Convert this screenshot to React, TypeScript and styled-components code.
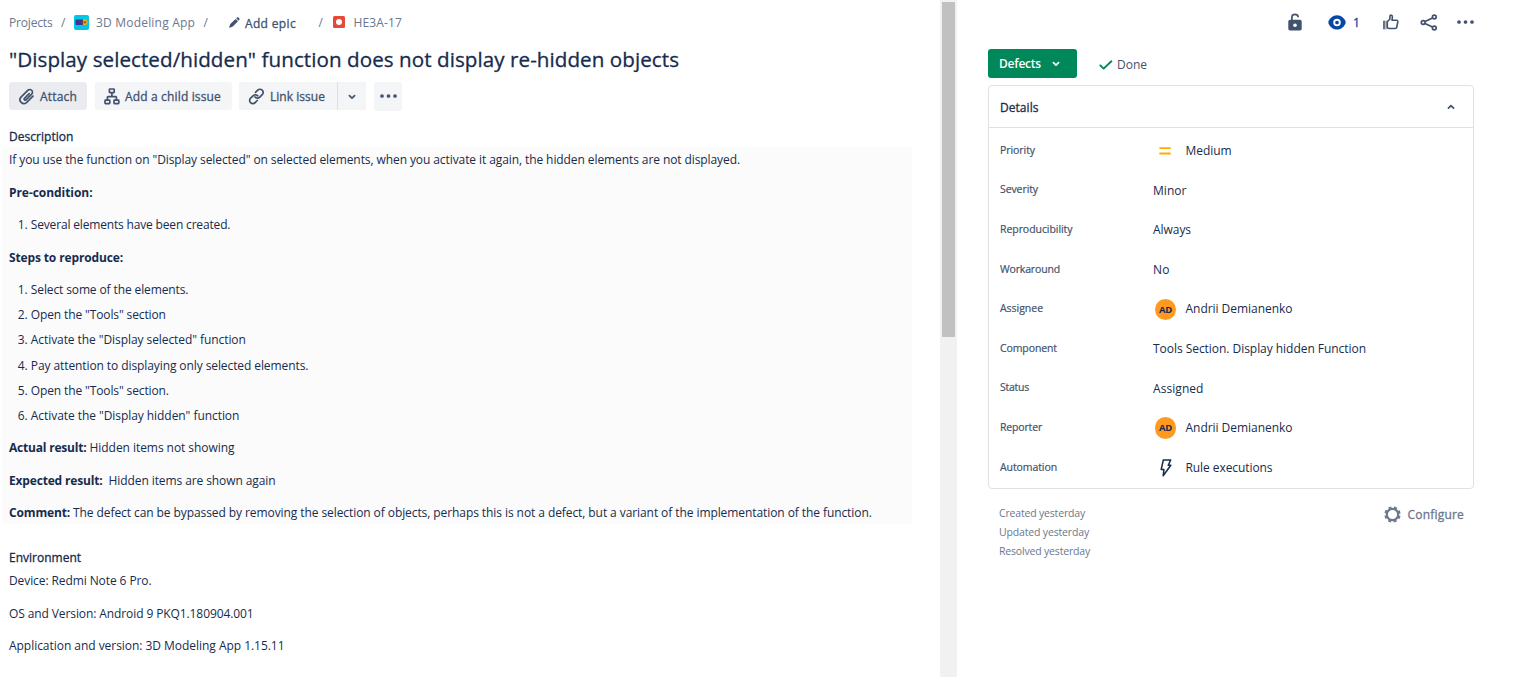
import React from "react";
import styled, { createGlobalStyle } from "styled-components";

const ink = "#172b4d";
const slate = "#42526e";
const grey = "#6b778c";

const Global = createGlobalStyle`
  * { box-sizing: border-box; }
  body {
    margin: 0;
    background: #fff;
    color: ${ink};
    font-family: "Open Sans", "Noto Sans", sans-serif;
    font-size: 12px;
    overflow: hidden;
  }
  svg { display: block; flex: none; }
`;

const Text = styled.span<{ $ls?: number; $medium?: boolean }>`
  white-space: pre;
  letter-spacing: ${(p) => p.$ls ?? 0}px;
  -webkit-text-stroke: ${(p) => (p.$medium ? "0.3px currentColor" : "0")};
`;

const Page = styled.div`
  display: flex;
  width: 1516px;
  height: 677px;
`;

const Main = styled.main`
  width: 940px;
  padding: 12px 28px 0 2px;
`;

const Inset = styled.div`
  padding-left: 7px;
`;

const Scrollbar = styled.div`
  width: 17px;
  padding: 2px 2px 0;
  background: #f1f1f1;
`;

const Thumb = styled.div`
  height: 335px;
  background: #c1c1c1;
`;

const Breadcrumbs = styled.nav`
  display: flex;
  align-items: center;
  height: 22px;
  color: ${grey};
`;

const Crumb = styled.div<{ $width?: number; $strong?: boolean; $raise?: boolean }>`
  display: flex;
  align-items: center;
  flex: none;
  width: ${(p) => (p.$width ? p.$width + "px" : "auto")};
  height: 22px;
  line-height: 22px;
  padding-bottom: ${(p) => (p.$raise ? 2 : 0)}px;
  padding-top: ${(p) => (p.$strong ? 1 : 0)}px;
  color: ${(p) => (p.$strong ? slate : grey)};
`;

const Title = styled.h1`
  margin: 10px 0 0;
  height: 30px;
  line-height: 30px;
  font-size: 20.6px;
  font-weight: 500;
`;

const Toolbar = styled.div`
  display: flex;
  align-items: flex-start;
  height: 53px;
  padding-top: 8px;
`;

const Button = styled.button<{ $width: number; $active?: boolean; $tall?: boolean; $round?: string; $left?: number; $after?: number }>`
  display: flex;
  align-items: center;
  gap: 5px;
  width: ${(p) => p.$width}px;
  height: ${(p) => (p.$tall ? 29 : 28)}px;
  margin-right: ${(p) => p.$after ?? 0}px;
  padding: ${(p) => (p.$tall ? 0 : 1)}px 0 ${(p) => (p.$tall ? 1 : 0)}px ${(p) => p.$left ?? 9}px;
  border: 0;
  border-radius: ${(p) => p.$round ?? "3px"};
  background: ${(p) => (p.$active ? "#ebecf0" : "#f4f5f7")};
  color: ${slate};
  font: 500 12px/28px "Open Sans", "Noto Sans", sans-serif;
`;

const Split = styled.div`
  display: flex;
  gap: 1px;
  margin-right: 8px;
  background: #dcdfe4;
  border-radius: 3px;
`;

const Label = styled.h2`
  margin: 0;
  height: 20px;
  line-height: 20px;
  font-size: 12px;
  font-weight: 500;
`;

const Description = styled.section`
  width: 910px;
  height: 377px;
  margin-bottom: 24px;
  padding: 2.4px 7px 0;
  border-radius: 3px;
  background: #fbfbfb;
`;

const Para = styled.p`
  margin: 0 0 10.8px;
  line-height: 21.6px;
  white-space: nowrap;
`;

const Steps = styled.ol`
  display: flex;
  flex-direction: column;
  gap: 3.6px;
  margin: 0 0 10.8px;
  padding: 0 0 0 21.8px;
  line-height: 21.6px;
`;

const Environment = styled.div`
  padding: 2.2px 0 0;
`;

const Side = styled.aside`
  width: 559px;
  padding: 10px 42px 0 31px;
`;

const Actions = styled.div`
  display: flex;
  align-items: center;
  height: 24px;
  padding-left: 300px;
  color: ${slate};
`;

const Action = styled.div<{ $width: number }>`
  display: flex;
  align-items: center;
  flex: none;
  gap: 7.5px;
  width: ${(p) => p.$width}px;
  color: #0747a6;
`;

const StatusRow = styled.div`
  display: flex;
  align-items: center;
  gap: 22px;
  height: 28px;
  margin-top: 15px;
`;

const StatusButton = styled.button`
  display: flex;
  align-items: center;
  justify-content: space-between;
  width: 89px;
  height: 29px;
  padding: 1px 17px 0 11px;
  border: 0;
  border-radius: 3px;
  background: #00875a;
  color: #fff;
  font: 600 12px/28px "Open Sans", "Noto Sans", sans-serif;
`;

const Resolution = styled.div`
  display: flex;
  align-items: center;
  gap: 4px;
  padding-top: 3px;
  color: ${slate};
`;

const Card = styled.section`
  width: 486px;
  height: 404px;
  margin-top: 8px;
  border: 1px solid #dfe1e6;
  border-radius: 4px;
`;

const CardHeader = styled.header`
  display: flex;
  align-items: center;
  justify-content: space-between;
  height: 42px;
  padding: 1px 18px 0 11px;
  border-bottom: 1px solid #dfe1e6;
`;

const Fields = styled.div`
  padding: 2.7px 0 0 11px;
`;

const Field = styled.div`
  display: grid;
  grid-template-columns: 153px 1fr;
  align-items: center;
  height: 39.6px;
`;

const FieldName = styled.div`
  padding-bottom: 1.4px;
  font-size: 10.5px;
  line-height: 16px;
  color: ${slate};
  span { -webkit-text-stroke: 0.2px currentColor; }
`;

const FieldValue = styled.div`
  display: flex;
  align-items: center;
  padding-top: 1px;
  line-height: 20px;
`;

const IconSlot = styled.div`
  display: flex;
  justify-content: center;
  flex: none;
  width: 25px;
  margin-right: 7.5px;
`;

const Avatar = styled.div`
  width: 21.5px;
  height: 21.5px;
  border-radius: 50%;
  background: #ff991f;
  color: ${ink};
  font-size: 9.5px;
  font-weight: 700;
  line-height: 21.5px;
  letter-spacing: -0.2px;
  text-align: center;
`;

const Footer = styled.footer`
  display: flex;
  justify-content: space-between;
  width: 486px;
  padding: 14px 10px 0 11px;
  color: ${grey};
`;

const Dates = styled.div`
  padding-top: 0.6px;
  font-size: 10.5px;
  line-height: 19.4px;
`;

const Configure = styled.div`
  display: flex;
  align-items: center;
  gap: 6.5px;
  height: 22px;
`;

const ProjectIcon = () => (
  <svg width="15" height="15" viewBox="0 0 15 15">
    <rect width="15" height="15" rx="2" fill="#00c7e5" />
    <rect x="1.5" y="4.500" width="8" height="5.500" rx="0.800" fill="#403294" />
    <circle cx="10.600" cy="7.200" r="2.900" fill="#f5a81c" />
    <circle cx="10.800" cy="7.200" r="1.300" fill="#8a6238" />
    <path d="M7.600 4.900h1.200v4.800H7.600z" fill="#36305f" />
  </svg>
);

const PencilIcon = () => (
  <svg width="11" height="11" viewBox="0 0 11 11" fill={slate}>
    <path d="M7.200 1.300 9.600 3.700 10.100 3.100c.6-.6.6-1.100.2-1.600l-.9-.9C8.900.2 8.400.2 7.800.7zM6.600 1.900 1.300 7.100.2 10.200c-.1.300.2.600.5.500L3.800 9.500 9 4.300z" />
  </svg>
);

const DefectIcon = () => (
  <svg width="12" height="12" viewBox="0 0 12 12">
    <rect width="12" height="12" rx="1.500" fill="#e5493a" />
    <circle cx="6" cy="6" r="3" fill="#fff" />
  </svg>
);

const ClipIcon = () => (
  <svg width="17" height="17" viewBox="0 0 17 17" fill="none" stroke={slate} strokeWidth="1.700" strokeLinecap="round">
    <path d="M11.200 5.600 6.500 10.300a1 1 0 0 0 1.500 1.500l5.700-5.700a2.700 2.700 0 0 0-3.900-3.800L3 9.100a3.900 3.900 0 0 0 5.500 5.500l6.500-6.500" />
  </svg>
);

const ChildIcon = () => (
  <svg width="16" height="17" viewBox="0 0 16 17" fill="none" stroke={slate} strokeWidth="1.700" strokeLinejoin="round">
    <rect x="5.400" y="1" width="4.800" height="3.600" rx=".6" />
    <rect x="1" y="12.200" width="4.800" height="3.400" rx=".6" />
    <rect x="10" y="12.200" width="4.800" height="3.400" rx=".6" />
    <path d="M7.900 4.600v4M3.400 12.200V9.300q0-.7.700-.7h7.600q.7 0 .7.700v2.900" />
  </svg>
);

const LinkIcon = () => (
  <svg width="17" height="17" viewBox="0 0 17 17" fill="none" stroke={slate} strokeWidth="1.700" strokeLinecap="round">
    <path d="M7.500 4.300 9.700 2.200a3.100 3.100 0 0 1 4.500 0 3.100 3.100 0 0 1 0 4.500L11.600 9.300a3.100 3.100 0 0 1-4.600-.3" />
    <path d="M9.300 12.500 7.100 14.700a3.100 3.100 0 0 1-4.500 0 3.100 3.100 0 0 1 0-4.500L5.300 7.600a3.100 3.100 0 0 1 4.500.3" />
  </svg>
);

const Chevron = ({ up, color = slate }: { up?: boolean; color?: string }) => (
  <svg width="8" height="6" viewBox="0 0 8 6" fill="none" stroke={color} strokeWidth="1.700" strokeLinecap="round" strokeLinejoin="round">
    <path d={up ? "M1.400 4.100 4 1.600l2.600 2.500" : "M1.400 1.700 4 4.200l2.600-2.500"} />
  </svg>
);

const DotsIcon = () => (
  <svg width="17" height="4" viewBox="0 0 17 4" fill={slate}>
    <circle cx="2" cy="2" r="1.850" />
    <circle cx="8.500" cy="2" r="1.850" />
    <circle cx="15" cy="2" r="1.850" />
  </svg>
);

const LockIcon = () => (
  <svg width="14" height="18" viewBox="0 0 14 18">
    <path d="M3.900 7.500V4.200q0-2.900 3.100-2.900 2.800 0 3.100 2.400" fill="none" stroke={slate} strokeWidth="1.700" strokeLinecap="round" />
    <rect x="0.300" y="6.800" width="13.400" height="10.800" rx="1.800" fill={slate} />
    <circle cx="7" cy="12.200" r="1.800" fill="#fff" />
  </svg>
);

const EyeIcon = () => (
  <svg width="18" height="15" viewBox="0 0 18 15">
    <path d="M9 .3C4.600.3 1.600 3.400.5 6.500q-.3.900 0 1.800C1.600 11.500 4.600 14.600 9 14.600s7.400-3.100 8.500-6.300q.3-.9 0-1.800C16.400 3.400 13.400.3 9 .3z" fill="#0747a6" />
    <circle cx="9" cy="7.500" r="2.800" fill="none" stroke="#fff" strokeWidth="1.900" />
  </svg>
);

const ThumbUpIcon = () => (
  <svg width="16" height="16" viewBox="0 0 16 16" fill="none" stroke={slate} strokeWidth="1.600" strokeLinejoin="round" strokeLinecap="round">
    <path d="M1 7.300v7.400" />
    <path d="M3 7.400v7.300" strokeWidth="1.800" opacity=".45" />
    <path d="M4.300 7.800 6.900 5V2.300Q7.100.9 8.400 1.200q1 .3 1 1.700L9 6.300h4.500q1.500.1 1.300 1.600l-1 5.100q-.3 1.500-1.700 1.500H6.200q-1.900 0-1.900-1.700z" />
  </svg>
);

const ShareIcon = () => (
  <svg width="18" height="17" viewBox="0 0 18 17" fill="none" stroke={slate} strokeWidth="1.700">
    <circle cx="3.200" cy="8.500" r="1.900" />
    <circle cx="14.300" cy="3" r="1.900" />
    <circle cx="14.300" cy="14" r="1.900" />
    <path d="m5 7.600 7.500-3.700M5 9.400l7.500 3.700" />
  </svg>
);

const CheckIcon = () => (
  <svg width="14" height="10" viewBox="0 0 14 10" fill="none" stroke="#00875a" strokeWidth="1.900" strokeLinecap="round" strokeLinejoin="round">
    <path d="m1.300 5.400 3.300 3.200 7.800-7.300" />
  </svg>
);

const MediumIcon = () => (
  <svg width="13" height="8" viewBox="0 0 13 8" fill="#ffab00">
    <rect x="0.300" y="0.200" width="11.500" height="1.900" rx=".5" />
    <rect x="0.300" y="5.600" width="11.500" height="1.900" rx=".5" />
  </svg>
);

const BoltIcon = () => (
  <svg width="12" height="18" viewBox="0 0 12 18" fill="none" stroke={ink} strokeWidth="1.500" strokeLinejoin="round">
    <path d="M3.300 1h7.400L8.200 6.200h2.600L3.200 16.800l.7-6.300H1.200z" />
  </svg>
);

const GearIcon = () => (
  <svg width="17" height="17" viewBox="0 0 17 17" fill="none" stroke={grey}>
    <circle cx="8.500" cy="8.500" r="5.700" strokeWidth="2.200" />
    <circle cx="8.500" cy="8.500" r="7.200" strokeWidth="1.900" strokeDasharray="3.100 2.555" strokeDashoffset="4.380" />
  </svg>
);

type Row = { name: string; nameLs: number; value: string; ls: number; icon?: React.ReactNode };

const rows: Row[] = [
  { name: "Priority", nameLs: -0.065, value: "Medium", ls: -0.062, icon: <MediumIcon /> },
  { name: "Severity", nameLs: -0.092, value: "Minor", ls: 0.039 },
  { name: "Reproducibility", nameLs: -0.055, value: "Always", ls: -0.052 },
  { name: "Workaround", nameLs: -0.156, value: "No", ls: 0.2 },
  { name: "Assignee", nameLs: -0.029, value: "Andrii Demianenko", ls: -0.035, icon: <Avatar>AD</Avatar> },
  { name: "Component", nameLs: -0.101, value: "Tools Section. Display hidden Function", ls: -0.042 },
  { name: "Status", nameLs: -0.253, value: "Assigned", ls: 0.061 },
  { name: "Reporter", nameLs: -0.167, value: "Andrii Demianenko", ls: -0.035, icon: <Avatar>AD</Avatar> },
  { name: "Automation", nameLs: -0.084, value: "Rule executions", ls: -0.075, icon: <BoltIcon /> },
];

const steps: [string, number][] = [
  ["Select some of the elements.", -0.12],
  ['Open the "Tools" section', -0.123],
  ['Activate the "Display selected" function', -0.074],
  ["Pay attention to displaying only selected elements.", -0.091],
  ['Open the "Tools" section.', -0.124],
  ['Activate the "Display hidden" function', -0.06],
];

export default function App() {
  return (
    <Page>
      <Global />
      <Main>
        <Inset>
          <Breadcrumbs>
            <Crumb $width={52}><Text $ls={-0.169}>Projects</Text></Crumb>
            <Crumb $width={13}>/</Crumb>
            <Crumb $width={22} $raise><ProjectIcon /></Crumb>
            <Crumb $width={107.5}><Text $ls={0.193}>3D Modeling App</Text></Crumb>
            <Crumb $width={25}>/</Crumb>
            <Crumb $width={16.5} $raise><PencilIcon /></Crumb>
            <Crumb $width={73.5} $strong><Text $medium $ls={0.344}>Add epic</Text></Crumb>
            <Crumb $width={14.5}>/</Crumb>
            <Crumb $width={20.5} $raise><DefectIcon /></Crumb>
            <Crumb><Text $ls={0.136}>HE3A-17</Text></Crumb>
          </Breadcrumbs>
          <Title><Text $medium $ls={0.062}>"Display selected/hidden" function does not display re-hidden objects</Text></Title>
          <Toolbar>
            <Button $width={78} $active $after={8}><ClipIcon /><Text $medium $ls={0.18}>Attach</Text></Button>
            <Button $width={137} $after={7}><ChildIcon /><Text $medium $ls={0.155}>Add a child issue</Text></Button>
            <Split>
              <Button $width={98} $round="3px 0 0 3px"><LinkIcon /><Text $medium $ls={0.036}>Link issue</Text></Button>
              <Button $width={28} $round="0 3px 3px 0" $left={9.5}><Chevron /></Button>
            </Split>
            <Button $width={28} $tall $left={5.5}><DotsIcon /></Button>
          </Toolbar>
          <Label><Text $medium $ls={0.039}>Description</Text></Label>
        </Inset>
        <Description>
          <Para><Text $ls={-0.089}>If you use the function on "Display selected" on selected elements, when you activate it again, the hidden elements are not displayed.</Text></Para>
          <Para><Text as="b" $ls={-0.056}>Pre-condition:</Text></Para>
          <Steps><li><Text $ls={-0.167}>Several elements have been created.</Text></li></Steps>
          <Para><Text as="b" $ls={-0.132}>Steps to reproduce:</Text></Para>
          <Steps>
            {steps.map(([step, ls]) => (
              <li key={step}><Text $ls={ls}>{step}</Text></li>
            ))}
          </Steps>
          <Para><Text as="b" $ls={-0.197}>Actual result:</Text><Text $ls={-0.055}> Hidden items not showing</Text></Para>
          <Para><Text as="b" $ls={-0.17}>Expected result:</Text><Text $ls={-0.09}>{"  Hidden items are shown again"}</Text></Para>
          <Para><Text as="b" $ls={-0.16}>Comment:</Text><Text $ls={-0.08}> The defect can be bypassed by removing the selection of objects, perhaps this is not a defect, but a variant of the implementation of the function.</Text></Para>
        </Description>
        <Inset>
          <Label><Text $medium>Environment</Text></Label>
          <Environment>
            <Para><Text $ls={-0.093}>Device: Redmi Note 6 Pro.</Text></Para>
            <Para><Text $ls={-0.1}>OS and Version: Android 9 PKQ1.180904.001</Text></Para>
            <Para><Text $ls={-0.037}>Application and version: 3D Modeling App 1.15.11</Text></Para>
          </Environment>
        </Inset>
      </Main>
      <Scrollbar><Thumb /></Scrollbar>
      <Side>
        <Actions>
          <Action $width={39.5}><LockIcon /></Action>
          <Action $width={55.5}><EyeIcon /><Text $medium>1</Text></Action>
          <Action $width={37}><ThumbUpIcon /></Action>
          <Action $width={36.5}><ShareIcon /></Action>
          <DotsIcon />
        </Actions>
        <StatusRow>
          <StatusButton><Text $ls={-0.216}>Defects</Text><Chevron color="#fff" /></StatusButton>
          <Resolution><CheckIcon /><Text>Done</Text></Resolution>
        </StatusRow>
        <Card>
          <CardHeader><Text $medium $ls={0.047}>Details</Text><Chevron up /></CardHeader>
          <Fields>
            {rows.map((row) => (
              <Field key={row.name}>
                <FieldName><Text $ls={row.nameLs}>{row.name}</Text></FieldName>
                <FieldValue>
                  {row.icon && <IconSlot>{row.icon}</IconSlot>}
                  <Text $ls={row.ls}>{row.value}</Text>
                </FieldValue>
              </Field>
            ))}
          </Fields>
        </Card>
        <Footer>
          <Dates>
            <div><Text $ls={-0.179}>Created yesterday</Text></div>
            <div><Text $ls={-0.161}>Updated yesterday</Text></div>
            <div><Text $ls={-0.18}>Resolved yesterday</Text></div>
          </Dates>
          <Configure><GearIcon /><Text $medium $ls={0.198}>Configure</Text></Configure>
        </Footer>
      </Side>
    </Page>
  );
}
